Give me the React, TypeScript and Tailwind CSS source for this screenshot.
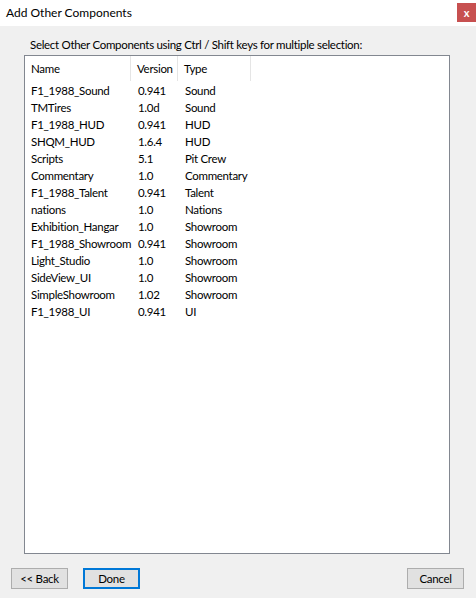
import React from "react";

interface component {
  name: string;
  version: string;
  type: string;
}

const components: Array<component> = [
  { name: "F1_1988_Sound", version: "0.941", type: "Sound" },
  { name: "TMTires", version: "1.0d", type: "Sound" },
  { name: "F1_1988_HUD", version: "0.941", type: "HUD" },
  { name: "SHQM_HUD", version: "1.6.4", type: "HUD" },
  { name: "Scripts", version: "5.1", type: "Pit Crew" },
  { name: "Commentary", version: "1.0", type: "Commentary" },
  { name: "F1_1988_Talent", version: "0.941", type: "Talent" },
  { name: "nations", version: "1.0", type: "Nations" },
  { name: "Exhibition_Hangar", version: "1.0", type: "Showroom" },
  { name: "F1_1988_Showroom", version: "0.941", type: "Showroom" },
  { name: "Light_Studio", version: "1.0", type: "Showroom" },
  { name: "SideView_UI", version: "1.0", type: "Showroom" },
  { name: "SimpleShowroom", version: "1.02", type: "Showroom" },
  { name: "F1_1988_UI", version: "0.941", type: "UI" },
];

const font = { fontFamily: 'Lato, "Liberation Sans", sans-serif' };

const App = () => {
  return (
    <div
      className="w-[476px] h-[598px] bg-[#f0f0f0] flex flex-col text-[11.5px] tracking-[-0.3px] text-black"
      style={font}
    >
      {/* title bar */}
      <div className="h-[26px] bg-white flex items-center justify-between pl-[6px] pr-0">
        <div className="text-[12px] leading-none tracking-normal">Add Other Components</div>
        <div className="w-[19px] h-[19px] bg-[#c75050] text-white flex items-center justify-center text-[11px] font-bold leading-none mb-[1px] tracking-normal">
          x
        </div>
      </div>

      <div className="px-[24px] pt-[11px] pr-[26px]">
        <div className="pl-[6px] leading-[16px] h-[18px]">
          Select Other Components using Ctrl / Shift keys for multiple selection:
        </div>
        <div className="h-[499px] bg-white border border-[#828790] mt-0">
          <div className="flex h-[25px]">
            <div className="w-[106px] pl-[6px] flex items-center border-r border-[#e5e5e5]">Name</div>
            <div className="w-[47px] pl-[6px] flex items-center border-r border-[#e5e5e5]">Version</div>
            <div className="w-[73px] pl-[6px] flex items-center border-r border-[#e5e5e5]">Type</div>
          </div>
          <div className="pt-[1px]">
            {components.map((c, i) => (
              <div key={i} className="flex h-[17px] items-center">
                <div className="w-[106px] pl-[6px] whitespace-nowrap">{c.name}</div>
                <div className="w-[47px] pl-[7px]">{c.version}</div>
                <div className="w-[73px] pl-[7px] whitespace-nowrap">{c.type}</div>
              </div>
            ))}
          </div>
        </div>
      </div>

      {/* buttons */}
      <div className="flex px-[11px] pt-[14px] gap-[15px]">
        <button className="w-[57px] h-[21px] bg-[#e1e1e1] border border-[#adadad] leading-none">
          &lt;&lt; Back
        </button>
        <button className="w-[57px] h-[21px] bg-[#e1e1e1] border-2 border-[#0078d7] leading-none">
          Done
        </button>
        <button className="w-[57px] h-[21px] bg-[#e1e1e1] border border-[#adadad] leading-none ml-auto mr-[1px]">
          Cancel
        </button>
      </div>
    </div>
  );
};

export default App;
